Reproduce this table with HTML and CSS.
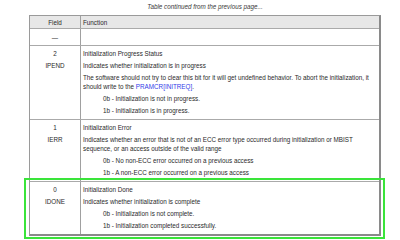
FILE: index.html
```html
<!DOCTYPE html>
<html>
<head>
<meta charset="utf-8">
<link rel="stylesheet" href="styles.css">
</head>
<body>
<div class="page">
  <p class="caption">Table continued from the previous page...</p>
  <div class="tbl">
    <div class="row head">
      <div class="field">Field</div>
      <div class="func">Function</div>
    </div>
    <div class="row dash">
      <div class="field">—</div>
      <div class="func"></div>
    </div>
    <div class="row">
      <div class="field"><p>2</p><p>IPEND</p></div>
      <div class="func">
        <p>Initialization Progress Status</p>
        <p>Indicates whether initialization is in progress</p>
        <p>The software should not try to clear this bit for it will get undefined behavior. To abort the initialization, it should write to the <span class="link">PRAMCR[INITREQ]</span>.</p>
        <p class="opt">0b - Initialization is not in progress.</p>
        <p class="opt">1b - Initialization is in progress.</p>
      </div>
    </div>
    <div class="row">
      <div class="field"><p>1</p><p>IERR</p></div>
      <div class="func">
        <p>Initialization Error</p>
        <p>Indicates whether an error that is not of an ECC error type occurred during initialization or MBIST sequence, or an access outside of the valid range</p>
        <p class="opt">0b - No non-ECC error occurred on a previous access</p>
        <p class="opt">1b - A non-ECC error occurred on a previous access</p>
      </div>
    </div>
    <div class="row">
      <div class="field"><p>0</p><p>IDONE</p></div>
      <div class="func">
        <p>Initialization Done</p>
        <p>Indicates whether initialization is complete</p>
        <p class="opt">0b - Initialization is not complete.</p>
        <p class="opt">1b - Initialization completed successfully.</p>
      </div>
    </div>
  </div>
  <div class="highlight"></div>
</div>
</body>
</html>
```
FILE: styles.css
```css
html, body {
  margin: 0;
  padding: 0;
  background: #ffffff;
}
.page {
  position: relative;
  width: 400px;
  height: 240px;
  font-family: "Liberation Sans", Arial, sans-serif;
  font-size: 6.3px;
  line-height: 9px;
  color: #2a2a2a;
}
p {
  margin: 0;
}
.caption {
  margin: 2px 0 4px 29px;
  width: 352px;
  text-align: center;
  font-style: italic;
  color: #3a3a3a;
}
.tbl {
  box-sizing: border-box;
  margin-left: 29px;
  width: 352px;
  border-top: 1px solid #9a9a9a;
  border-left: 1px solid #9a9a9a;
  border-right: 2px solid #8a8a8a;
  border-bottom: 2px solid #8a8a8a;
}
.row {
  display: grid;
  grid-template-columns: 51px 1fr;
  border-top: 1px solid #aaaaaa;
}
.row.head {
  border-top: none;
  background: #e7e7e7;
}
.field {
  box-sizing: border-box;
  border-right: 1px solid #a0a0a0;
  text-align: center;
  padding: 3px 0 4px;
}
.func {
  padding: 3px 5px 4px 2px;
}
.head .field, .head .func {
  padding-top: 1.5px;
  padding-bottom: 1.5px;
}
.dash .field, .dash .func {
  padding-top: 4px;
  padding-bottom: 3px;
}
.field p + p, .func p + p {
  margin-top: 3px;
}
.func .opt {
  padding-left: 20px;
}
.link {
  color: #3340e8;
}
.highlight {
  position: absolute;
  left: 24px;
  top: 176px;
  width: 357px;
  height: 57px;
  border: 2px solid #3ae43a;
}
```
